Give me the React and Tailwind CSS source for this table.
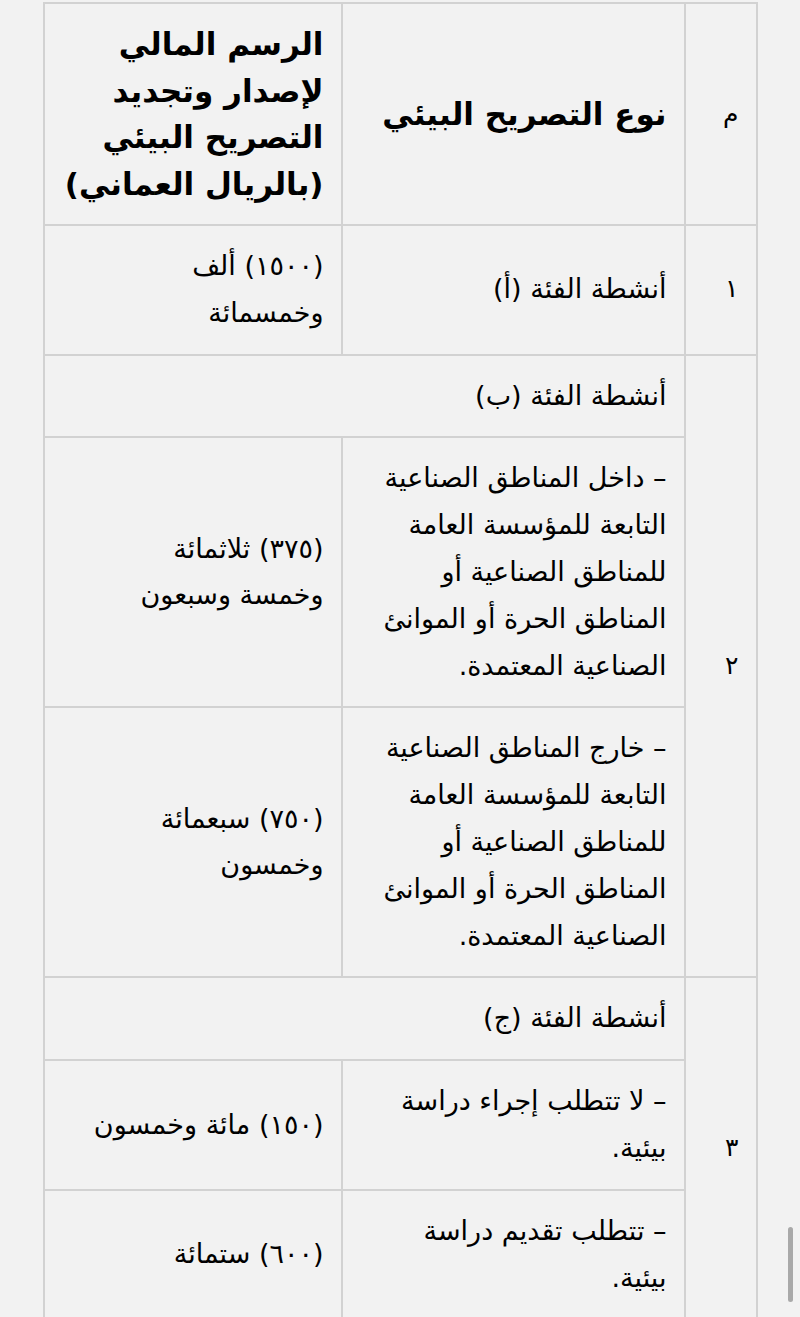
import React from "react"

const fees = [
    { id: "١", type: "أنشطة الفئة (أ)", fee: ["(١٥٠٠) ألف", "وخمسمائة"] },
]

const groups = [
    {
        id: "٢",
        title: "أنشطة الفئة (ب)",
        rows: [
            {
                type: ["– داخل المناطق الصناعية", "التابعة للمؤسسة العامة", "للمناطق الصناعية أو", "المناطق الحرة أو الموانئ", "الصناعية المعتمدة."],
                fee: ["(٣٧٥) ثلاثمائة", "وخمسة وسبعون"],
            },
            {
                type: ["– خارج المناطق الصناعية", "التابعة للمؤسسة العامة", "للمناطق الصناعية أو", "المناطق الحرة أو الموانئ", "الصناعية المعتمدة."],
                fee: ["(٧٥٠) سبعمائة", "وخمسون"],
            },
        ],
    },
    {
        id: "٣",
        title: "أنشطة الفئة (ج)",
        rows: [
            { type: ["– لا تتطلب إجراء دراسة", "بيئية."], fee: ["(١٥٠) مائة وخمسون"] },
            { type: ["– تتطلب تقديم دراسة", "بيئية."], fee: ["(٦٠٠) ستمائة"] },
        ],
    },
]

const cell = "border-2 border-[#d2d2d2] px-[17px] py-[17px] align-middle text-right"

function Lines({ lines }) {
    return lines.map((l, i) => (
        <span key={i} className="block whitespace-nowrap">{l}</span>
    ))
}

export default function App() {
    return (
        <div className="min-h-screen bg-[#f2f2f2] pt-[2px] text-black" style={{ fontFamily: '"DejaVu Sans", sans-serif' }}>
            <table dir="rtl" className="mx-auto w-[713px] table-fixed border-collapse text-[27px] leading-[46.8px]">
                <colgroup>
                    <col className="w-[72px]" />
                    <col className="w-[343px]" />
                    <col className="w-[298px]" />
                </colgroup>
                <thead>
                    <tr>
                        <th className={cell + " text-[25px] font-normal"}>م</th>
                        <th className={cell + " text-[31px] font-bold"}>نوع التصريح البيئي</th>
                        <th className={cell + " text-[31px] font-bold leading-[46.5px]"}>
                            <Lines lines={["الرسم المالي", "لإصدار وتجديد", "التصريح البيئي", "(بالريال العماني)"]} />
                        </th>
                    </tr>
                </thead>
                <tbody>
                    {fees.map((f) => (
                        <tr key={f.id}>
                            <td className={cell + " text-[25px]"}>{f.id}</td>
                            <td className={cell}>{f.type}</td>
                            <td className={cell}><Lines lines={f.fee} /></td>
                        </tr>
                    ))}
                    {groups.map((g) => (
                        <React.Fragment key={g.id}>
                            <tr>
                                <td className={cell + " text-[25px]"} rowSpan={g.rows.length + 1}>{g.id}</td>
                                <td className={cell} colSpan={2}>{g.title}</td>
                            </tr>
                            {g.rows.map((r, i) => (
                                <tr key={i}>
                                    <td className={cell}><Lines lines={r.type} /></td>
                                    <td className={cell}><Lines lines={r.fee} /></td>
                                </tr>
                            ))}
                        </React.Fragment>
                    ))}
                </tbody>
            </table>
            <div className="fixed right-[7px] top-[1227px] h-[75px] w-[5px] rounded-full bg-[#a9a9a9]" />
        </div>
    )
}
